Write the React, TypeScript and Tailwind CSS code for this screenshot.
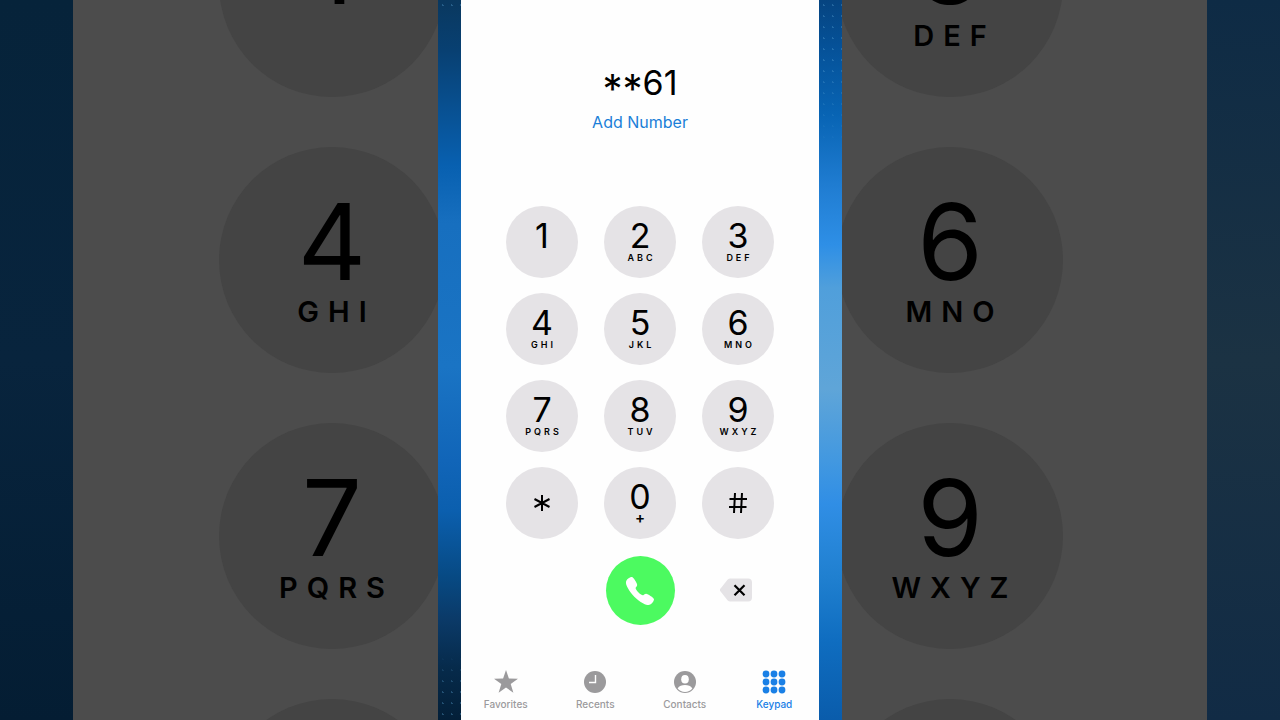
import React from 'react';
import { IoCall } from 'react-icons/io5';

type KeyData = { digit: string; letters?: string };

const keys: KeyData[] = [
    { digit: '1' },
    { digit: '2', letters: 'ABC' },
    { digit: '3', letters: 'DEF' },
    { digit: '4', letters: 'GHI' },
    { digit: '5', letters: 'JKL' },
    { digit: '6', letters: 'MNO' },
    { digit: '7', letters: 'PQRS' },
    { digit: '8', letters: 'TUV' },
    { digit: '9', letters: 'WXYZ' },
    { digit: '*' },
    { digit: '0', letters: '+' },
    { digit: '#' },
];

function StarKeyIcon() {
    return (
        <svg viewBox="0 0 18 18" className="size-[18px]" fill="none" stroke="currentColor" strokeWidth="2">
            <path d="M9 1v16M1.500 5l15 8M16.500 5l-15 8" />
        </svg>
    );
}

function HashKeyIcon() {
    return (
        <svg viewBox="0 0 20 22" className="h-[22px] w-5" fill="none" stroke="currentColor" strokeWidth="2">
            <path d="M7 1L6 21M14 1l-1 20M1.500 7h17.500M1 15h17.500" />
        </svg>
    );
}

function KeypadKey({ digit, letters }: KeyData) {
    if (digit === '*' || digit === '#') {
        return (
            <button aria-label={digit === '*' ? 'star' : 'pound'} className="flex size-[72px] items-center justify-center rounded-full bg-[#e5e3e6]">
                {digit === '*' ? <StarKeyIcon /> : <HashKeyIcon />}
            </button>
        );
    }
    return (
        <button className="flex size-[72px] flex-col items-center rounded-full bg-[#e5e3e6] pt-[14px]">
            <span className="text-[34px] leading-8">{digit}</span>
            {letters === '+' && <span className="text-[15px] leading-[10px] font-semibold">+</span>}
            {letters && letters !== '+' && (
                <span className="mt-px pl-[3px] text-[9px] leading-none font-semibold tracking-[3px]">{letters}</span>
            )}
        </button>
    );
}

// enlarged, dimmed copy of one keypad column
function BackdropColumn({ items }: { items: KeyData[] }) {
    return (
        <div className="-mt-[129px] flex shrink-0 flex-col gap-[50px]">
            {items.map((item) => (
                <div key={item.digit} className="flex size-[226px] flex-col items-center rounded-full bg-[#444444] pt-[42px]">
                    <span className="text-[106px] leading-none">{item.digit}</span>
                    {item.letters && (
                        <span className="mt-0.5 pl-[9px] text-[29px] leading-none font-semibold tracking-[9px]">{item.letters}</span>
                    )}
                </div>
            ))}
        </div>
    );
}

function Dots({ className }: { className: string }) {
    return (
        <div className={`bg-[radial-gradient(circle,#5fa8d855_1px,transparent_1px)] bg-size-[9px_11px] ${className}`} />
    );
}

const tabs = [
    {
        label: 'Favorites',
        icon: <path d="M12 0l2.900 8.600 9.100.1-7.300 5.400 2.700 8.700-7.400-5.300-7.400 5.300 2.700-8.700L0 8.700l9.100-.1z" />,
    },
    {
        label: 'Recents',
        icon: (
            <>
                <circle cx="12" cy="12" r="11" />
                <path d="M12.500 5v7.500H6" fill="none" stroke="#fff" strokeWidth="1.400" />
            </>
        ),
    },
    {
        label: 'Contacts',
        icon: (
            <>
                <circle cx="12" cy="12" r="11" />
                <ellipse cx="12" cy="9.300" rx="3.800" ry="4.300" fill="#fff" />
                <path d="M4.600 18.500c1.600-2.400 4.200-3.400 7.400-3.400s5.800 1 7.400 3.400a9.600 9.600 0 0 1-14.800 0z" fill="#fff" />
            </>
        ),
    },
    {
        label: 'Keypad',
        icon: [4, 12, 20].map((cy) => [4, 12, 20].map((cx) => <circle key={`${cx}-${cy}`} cx={cx} cy={cy} r="3.400" />)),
    },
];

export default function App() {
    return (
        <div className="flex h-screen overflow-hidden bg-[#4c4c4c] font-['Inter','Liberation_Sans',sans-serif] text-black">
            <aside aria-hidden="true" className="flex min-w-0 flex-1 overflow-hidden">
                <div className="w-[73px] shrink-0 bg-linear-to-b from-[#06233a] via-[#08243d] to-[#041d33]" />
                <div className="flex min-w-0 flex-1 items-start overflow-hidden pl-[146px]">
                    <BackdropColumn items={[keys[0], keys[3], keys[6], keys[9]]} />
                </div>
            </aside>

            <main className="flex w-[404px] shrink-0">
                <div className="flex w-[23px] flex-col justify-between bg-[linear-gradient(#0a385f_0%,#084072_7%,#0860b0_23%,#176fbf_31%,#1a74c4_51%,#1165b8_64%,#0b5fae_71%,#074a84_80%,#0b3a68_86%,#062a4a_93%,#031f38_100%)]">
                    <Dots className="h-[11px]" />
                    <Dots className="h-[66px] mask-t-from-50%" />
                </div>

                <div className="flex min-w-0 flex-1 flex-col items-center bg-[#fefefe]">
                    <h1 className="mt-[66px] h-[34px] text-[34px] leading-[34px] whitespace-nowrap">
                        <span className="align-sub text-[40px] leading-none">**</span>61
                    </h1>
                    <button className="mt-2.5 text-[16px] leading-6 text-[#1a7fd8]">Add Number</button>

                    <div className="mt-[72px] grid grid-cols-3 gap-x-[26px] gap-y-[15px]">
                        {keys.map((k) => (
                            <KeypadKey key={k.digit} {...k} />
                        ))}
                    </div>

                    <div className="mt-[17px] grid grid-cols-[72px_72px_72px] items-center justify-items-center gap-x-[26px]">
                        <button aria-label="Call" className="col-start-2 flex size-[69px] items-center justify-center rounded-full bg-[#4cfa60] text-white">
                            <IoCall className="size-8" />
                        </button>
                        <button aria-label="Delete" className="pr-1 pb-0.5">
                            <svg viewBox="0 0 32 24" className="h-6 w-8">
                                <path d="M10.500 0.500H28a4 4 0 0 1 4 4v15a4 4 0 0 1-4 4H10.500a4 4 0 0 1-3-1.300L.6 13.500a2 2 0 0 1 0-3l6.900-8.700a4 4 0 0 1 3-1.300z" fill="#e5e3e6" />
                                <path d="M14.500 7.200l10 10M24.500 7.200l-10 10" stroke="#000" strokeWidth="2.200" />
                            </svg>
                        </button>
                    </div>

                    <nav className="mt-auto grid w-full grid-cols-4 pb-2.5">
                        {tabs.map((tab) => (
                            <button
                                key={tab.label}
                                className={`flex flex-col items-center gap-1 ${tab.label === 'Keypad' ? 'text-[#1a80e6]' : 'text-[#9b9a9c]'}`}
                            >
                                <svg viewBox="0 0 24 24" className="size-6" fill="currentColor">
                                    {tab.icon}
                                </svg>
                                <span className="text-[10px] leading-3 font-medium">{tab.label}</span>
                            </button>
                        ))}
                    </nav>
                </div>

                <div className="w-[23px] bg-[linear-gradient(#064480_0%,#055096_6%,#0864b4_16%,#207dd2_26%,#2e8fe6_34%,#509fdb_40%,#5fa5d8_54%,#4298e0_64%,#308ee5_70%,#2080d0_80%,#0f6dc0_89%,#0a5cab_100%)]">
                    <Dots className="h-[154px] mask-b-from-40%" />
                </div>
            </main>

            <aside aria-hidden="true" className="flex min-w-0 flex-1 overflow-hidden">
                <div className="flex min-w-0 flex-1 items-start justify-end overflow-hidden pr-[144px]">
                    <BackdropColumn items={[keys[2], keys[5], keys[8], keys[11]]} />
                </div>
                <div className="w-[73px] shrink-0 bg-linear-to-b from-[#0e2b45] via-[#1b3243] to-[#112b45]" />
            </aside>
        </div>
    );
}
